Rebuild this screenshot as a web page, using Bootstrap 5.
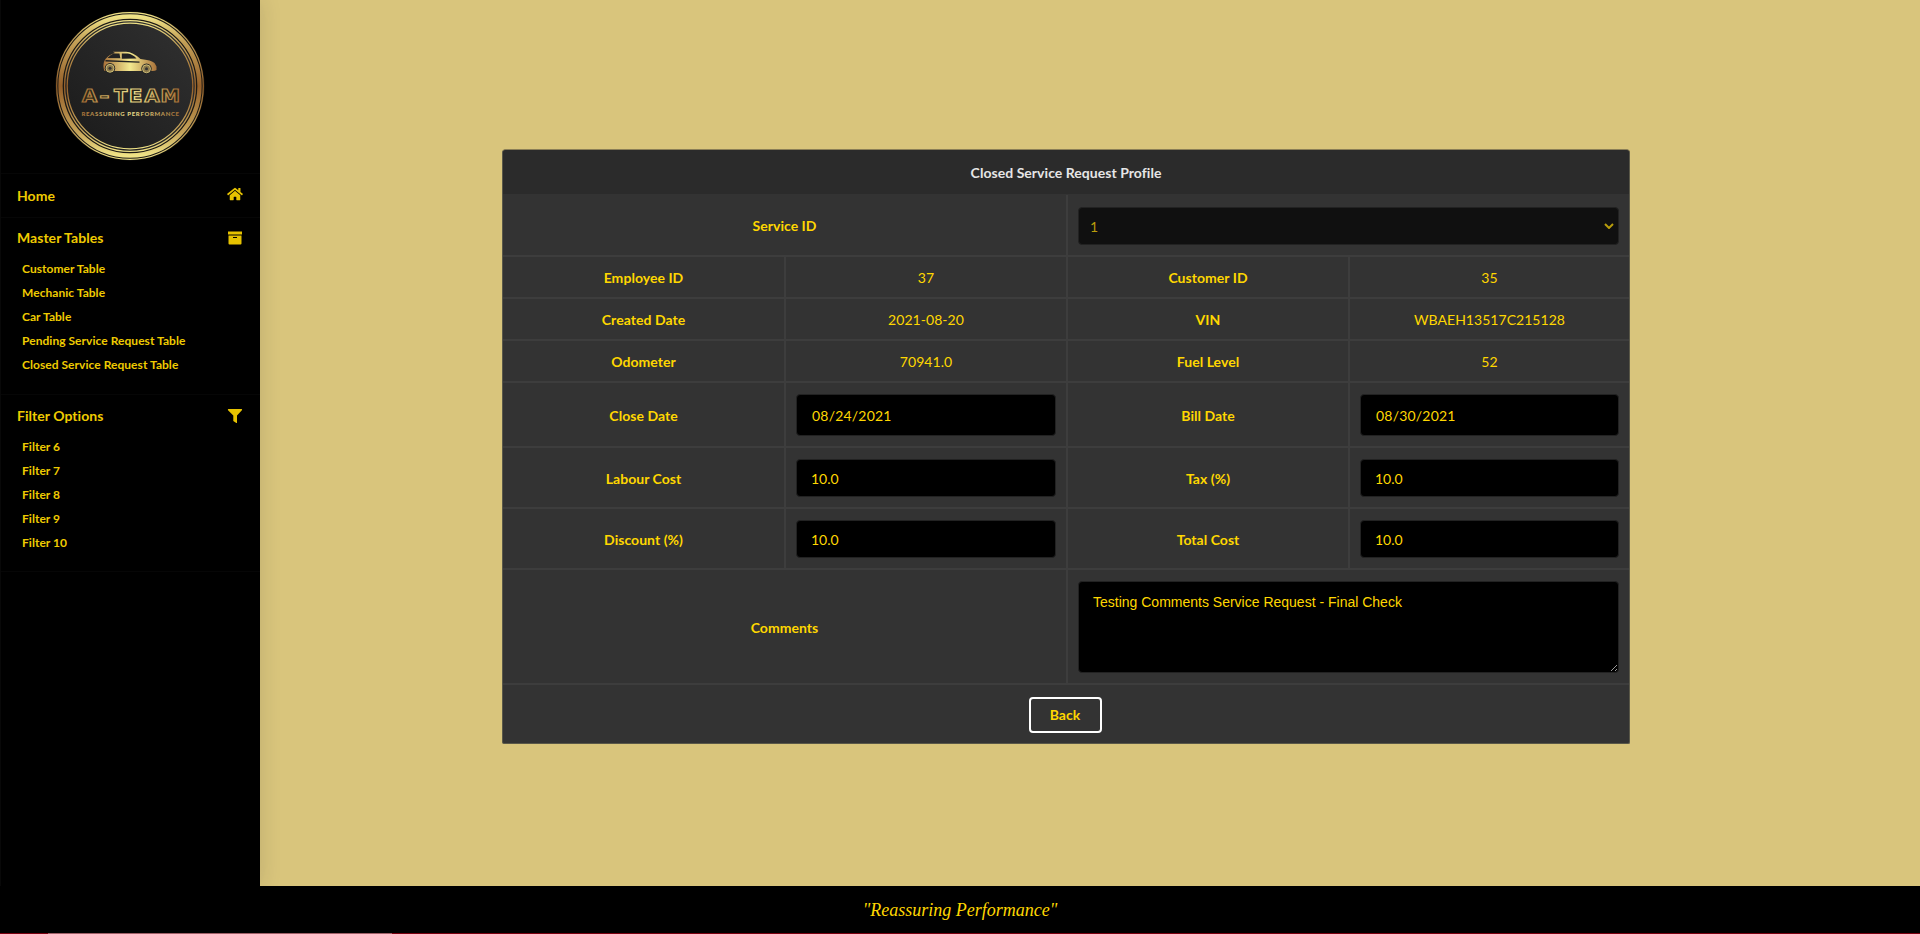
<!DOCTYPE html>
<html lang="en">
<head>
<meta charset="utf-8">
<title>Closed Service Request Profile</title>
<link href="https://cdn.jsdelivr.net/npm/bootstrap@5.3.0/dist/css/bootstrap.min.css" rel="stylesheet">
<style>
body{font-family:Lato,sans-serif;font-size:14px;line-height:20px;background:#d9c57c;color:#ffd700;overflow:hidden;letter-spacing:.04px}
.side{width:260px;background:#000;box-shadow:0 0 20px rgba(34,36,38,.15);border-left:1px solid #080808}
.logo-box{height:173px;padding:10px 2px 0 0}
.sec{border-top:1px solid #060606;padding:0 17px 0 16px;font-weight:700;color:#efcb00}
.sec-home{height:44px}
.sec-master{height:177px}
.sec-filter{height:177px}
.sec-head{height:39px}
.sec-home .sec-head{height:42px;padding-top:1px}
.sec-filter .sec-head{height:40px;padding-top:1px}
.sec a{display:block;height:24px;line-height:24px;font-size:12px;padding-left:5px;color:#efcb00;text-decoration:none}
.sec svg{fill:#e6c200}
.profile{width:1128px;table-layout:fixed;border-collapse:separate;border-spacing:0;background:#333;margin:149px 0 0 242px;border:1px solid #5a5848;border-top-color:#8b7f57;border-radius:4px 4px 2px 2px;overflow:hidden}
.profile th,.profile td{text-align:center;vertical-align:middle;padding:2px 10px 0;border-bottom:2px solid #3d3d3d;border-left:2px solid #3d3d3d}
.profile tr>:first-child{border-left:0}
.profile thead th{background:#2b2b2b;color:#e6e6e6;height:45px;border-bottom:1px solid #333}
.profile tbody tr{height:42px}
.profile tbody tr.r-sel{height:62px}
.profile tbody tr.r-date{height:65px}
.profile tbody tr.r-in{height:61px}
.profile tbody tr.r-com{height:115px}
.profile tbody tr.r-btn{height:58px}
.profile .r-date td,.profile .r-in td,.profile .r-com td{padding-top:1px}
.profile tbody tr.r-btn td{border-bottom:0;padding-top:1px}
.col-edge{width:281px}
.col-mid{width:282px}
.profile .form-control,.profile .sel{background:#000;color:#ffd700;border:1px solid #222;border-radius:4px;font-size:14px;line-height:17px;height:38px;padding:0 14px;box-shadow:none}
.profile .r-date .form-control{height:42px;padding-left:15px;padding-top:1px;letter-spacing:.2px}
.profile .sel{background:#101010;color:#b89d0c;padding:0 9px 0 11px}
.profile textarea.form-control{height:92px;padding:11px 14px;font-family:"Liberation Sans",Arial,sans-serif;line-height:18px;letter-spacing:0;resize:vertical}
.back{border:2px solid #fff;border-radius:4px;color:#ffd700;font-size:14px;font-weight:700;line-height:14px;width:73px;height:36px;padding:0;margin-right:2px}
.foot{height:48px;background:#000;border-bottom:1px solid #7a0010;font:italic 18px/48px "Liberation Serif",serif;color:#ffd700;letter-spacing:0}
.load{position:absolute;left:48px;bottom:0;width:344px;height:1px;background:#a06068}
</style>
</head>
<body>
<div class="d-flex flex-column vh-100">
<div class="d-flex flex-grow-1">
<aside class="side flex-shrink-0">
<div class="logo-box text-center">
<svg width="152" height="152" viewBox="54 10 152 152">
<defs>
<linearGradient id="ring" x1="0" y1="0" x2="0" y2="1"><stop offset="0" stop-color="#efe286"/><stop offset=".17" stop-color="#c5a359"/><stop offset=".5" stop-color="#96602a"/><stop offset=".83" stop-color="#c5a359"/><stop offset="1" stop-color="#efe286"/></linearGradient>
<linearGradient id="gold" x1="0" x2="1"><stop offset="0" stop-color="#a9723a"/><stop offset=".5" stop-color="#f3e98f"/><stop offset="1" stop-color="#a9723a"/></linearGradient>
<linearGradient id="word" gradientUnits="userSpaceOnUse" x1="81" x2="180" y1="0" y2="0"><stop offset="0" stop-color="#a26c34"/><stop offset=".5" stop-color="#ece08a"/><stop offset="1" stop-color="#a26c34"/></linearGradient>
<linearGradient id="wordmark" gradientUnits="userSpaceOnUse" x1="0" x2="86" y1="0" y2="0"><stop offset="0" stop-color="#a26c34"/><stop offset=".5" stop-color="#ece08a"/><stop offset="1" stop-color="#a26c34"/></linearGradient>
<linearGradient id="disc" x1="0" y1="1" x2="1" y2="0"><stop offset="0" stop-color="#1a1a1a"/><stop offset="1" stop-color="#313131"/></linearGradient>
</defs>
<circle cx="130" cy="86" r="74.500" fill="#1d1a14"/>
<circle cx="130" cy="86" r="66" fill="url(#disc)"/>
<g fill="none" stroke="url(#ring)"><circle cx="130" cy="86" r="73.300" stroke-width="1.200"/><circle cx="130" cy="86" r="69.500" stroke-width="4.300"/><circle cx="130" cy="86" r="65.400" stroke-width="1.300"/><circle cx="130" cy="86" r="62.800" stroke-width="1.300"/></g>
<path fill="url(#gold)" d="M103.700 68.500q-1-6 1.800-9.500 3.500-4.500 9.500-6l-2-1.300h13q7 .2 14.500 7.300 11 1 14 4l2 3.500v3.500q-1 1-4.500 1h-47q-1 0-1.300-2.500z"/>
<path fill="#222" d="M107.500 58q3-3.500 6-4.500h6l.8 4.800zM121.800 53.500h6q5 .8 8.700 5l-14.700.2zM105.500 60l34 1.500v1.200l-34-1.200z"/>
<circle cx="110" cy="68.300" r="5.200" fill="#222"/><circle cx="146.500" cy="68.800" r="5.200" fill="#222"/>
<g fill="#8d7a4b" stroke="#e0cf80" stroke-width=".8"><circle cx="110" cy="68.300" r="4"/><circle cx="146.500" cy="68.800" r="4"/></g>
<circle cx="110" cy="68.300" r="1.500" fill="#333"/><circle cx="146.500" cy="68.800" r="1.500" fill="#333"/>
<text transform="translate(82 101.500) scale(1.150 1)" x="0 15.300 27.800 40.800 54.300 68.300" y="0" font-family="DejaVu Sans,sans-serif" font-weight="700" font-size="17" fill="#2a2618" stroke="url(#wordmark)" stroke-width="1.200">A–TEAM</text>
<text x="81.500" y="115.900" textLength="97.500" font-family="Lato,sans-serif" font-weight="900" font-size="6" fill="url(#word)">REASSURING PERFORMANCE</text>
</svg>
</div>
<section class="sec sec-home"><div class="sec-head d-flex justify-content-between align-items-center"><span>Home</span>
<svg class="mb-1" width="16" height="14" viewBox="0 0 576 512"><path d="M280 148 96 300v164q0 16 16 16h112q16 0 16-16v-96q0-16 16-16h64q16 0 16 16v96q0 16 16 16h112q16 0 16-16V300L296 148q-8-6-16 0zM572 251l-84-69V44q0-12-12-12h-56q-12 0-12 12v72l-90-74q-30-22-60 0L4 251q-8 8-1 17l26 31q8 8 16 2L280 107q8-6 16 0l235 194q9 6 17-2l25-31q7-9-1-17z"/></svg></div></section>
<section class="sec sec-master"><div class="sec-head d-flex justify-content-between align-items-center"><span>Master Tables</span>
<svg width="16" height="14" viewBox="0 0 16 14"><path d="M1 .5h14v3H1zM1.500 4.500h13v8q0 1-1 1h-11q-1 0-1-1zM6 6v1h4V6z" fill-rule="evenodd"/></svg></div>
<a href="#">Customer Table</a><a href="#">Mechanic Table</a><a href="#">Car Table</a><a href="#">Pending Service Request Table</a><a href="#">Closed Service Request Table</a></section>
<section class="sec sec-filter"><div class="sec-head d-flex justify-content-between align-items-center"><span>Filter Options</span>
<svg width="16" height="16" viewBox="0 0 16 16"><path d="M1.300 1h13.400q.8.500.2 1.200L10 7.500V15h-.7L6.300 13V7.500L1 2.200Q.6 1.400 1.300 1z"/></svg></div>
<a href="#">Filter 6</a><a href="#">Filter 7</a><a href="#">Filter 8</a><a href="#">Filter 9</a><a href="#">Filter 10</a></section>
<section class="sec"></section>
</aside>
<main>
<table class="profile">
<colgroup><col class="col-edge"><col class="col-mid"><col class="col-mid"><col class="col-edge"></colgroup>
<thead><tr><th colspan="4">Closed Service Request Profile</th></tr></thead>
<tbody>
<tr class="r-sel"><th colspan="2">Service ID</th><td colspan="2"><div class="sel d-flex align-items-center justify-content-between"><span>1</span><svg width="10" height="6" viewBox="0 0 10 6" style="margin-right:-5px" fill="none" stroke="#b89d0c" stroke-width="2"><path d="M1 1l4 4 4-4"/></svg></div></td></tr>
<tr><th>Employee ID</th><td>37</td><th>Customer ID</th><td>35</td></tr>
<tr><th>Created Date</th><td>2021-08-20</td><th>VIN</th><td>WBAEH13517C215128</td></tr>
<tr><th>Odometer</th><td>70941.0</td><th>Fuel Level</th><td>52</td></tr>
<tr class="r-date"><th>Close Date</th><td><input class="form-control" value="08/24/2021"></td><th>Bill Date</th><td><input class="form-control" value="08/30/2021"></td></tr>
<tr class="r-in"><th>Labour Cost</th><td><input class="form-control" value="10.0"></td><th>Tax (%)</th><td><input class="form-control" value="10.0"></td></tr>
<tr class="r-in"><th>Discount (%)</th><td><input class="form-control" value="10.0"></td><th>Total Cost</th><td><input class="form-control" value="10.0"></td></tr>
<tr class="r-com"><th colspan="2">Comments</th><td colspan="2"><textarea class="form-control">Testing Comments Service Request - Final Check</textarea></td></tr>
<tr class="r-btn"><td colspan="4"><button class="back bg-transparent">Back</button></td></tr>
</tbody>
</table>
</main>
</div>
<footer class="foot text-center flex-shrink-0">"Reassuring Performance"</footer>
</div>
<div class="load"></div>
<script src="https://cdn.jsdelivr.net/npm/bootstrap@5.3.0/dist/js/bootstrap.bundle.min.js"></script>
</body>
</html>
